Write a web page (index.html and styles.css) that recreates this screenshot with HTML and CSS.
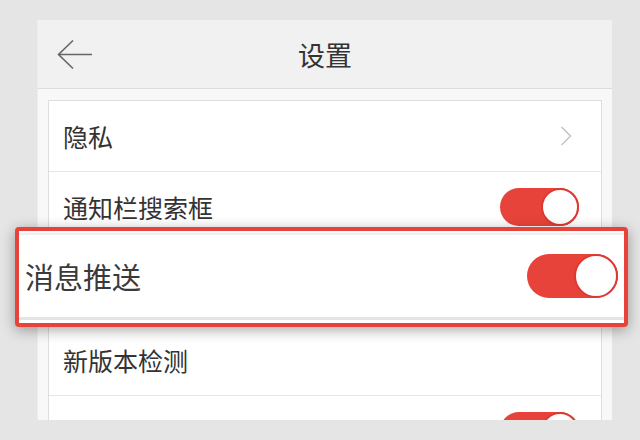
FILE: index.html
```html
<!DOCTYPE html>
<html lang="zh-CN">
<head>
    <meta charset="UTF-8">
    <meta name="viewport" content="width=device-width, initial-scale=1.0">
    <title>设置</title>
    <link rel="stylesheet" href="styles.css">
</head>
<body>

<div class="screen">
    <div class="topbar">
        <svg class="back" width="38" height="32" viewBox="0 0 38 32">
            <path d="M36 15.5 H2.5 M17 1.5 L2.5 15.5 L17 29.5" fill="none" stroke="#666" stroke-width="1.6"/>
        </svg>
        <h1 class="title">设置</h1>
        <span></span>
    </div>

    <div class="list">
        <div class="row">
            <span class="label">隐私</span>
            <svg class="chevron" width="12" height="20" viewBox="0 0 12 20">
                <path d="M1.5 1 L10.5 10 L1.5 19" fill="none" stroke="#c4c4c4" stroke-width="1.5"/>
            </svg>
        </div>
        <div class="row">
            <span class="label">通知栏搜索框</span>
            <span class="switch"></span>
        </div>
        <!-- covered by the callout below -->
        <div class="row row-tall">
            <span class="label">消息推送</span>
            <span class="switch"></span>
        </div>
        <div class="row">
            <span class="label">新版本检测</span>
        </div>
        <div class="row">
            <span class="label"></span>
            <span class="switch"></span>
        </div>
    </div>
</div>

<!-- enlarged copy of the push row, laid over the list -->
<div class="callout">
    <div class="callout-row">
        <span class="callout-label">消息推送</span>
        <span class="switch switch-lg"></span>
    </div>
</div>

</body>
</html>
```

FILE: styles.css
```css
body {
    margin: 0;
    background-color: #e5e5e5;
    font-family: "Noto Sans CJK SC", "Noto Sans", sans-serif;
    color: #333;
    height: 440px;
    overflow: hidden;
}

.screen {
    margin: 20px 0 0 38px;
    width: 574px;
    height: 400px;
    overflow: hidden;
    background-color: #f8f8f8;
    box-shadow: -1px 0 0 #ececec;
}

.topbar {
    height: 68px;
    background-color: #f1f1f1;
    border-bottom: 1px solid #dcdcdc;
    display: grid;
    grid-template-columns: 1fr auto 1fr;
    align-items: center;
}

.back {
    margin-left: 18px;
    margin-top: 2px;
}

.title {
    margin: 0;
    font-size: 27px;
    font-weight: 400;
    color: #333;
}

.list {
    margin: 11px 10px 0;
    background-color: #fff;
    border: 1px solid #dedede;
}

.row {
    height: 70px;
    border-bottom: 1px solid #e6e6e6;
    display: flex;
    align-items: center;
    justify-content: space-between;
    padding: 0 22px 0 14px;
}

.row-tall {
    height: 81px;
}

.row-tall > * {
    visibility: hidden;
}

.label {
    font-size: 25px;
    line-height: 1;
}

.chevron {
    margin-right: 7px;
}

.switch {
    position: relative;
    width: 79px;
    height: 38px;
    border-radius: 19px;
    background-color: #e8433a;
    box-sizing: border-box;
}

.switch::after {
    content: "";
    position: absolute;
    right: 0;
    top: 0;
    width: 38px;
    height: 38px;
    border-radius: 50%;
    background-color: #fff;
    border: 2px solid #dc3a31;
    box-sizing: border-box;
}

.switch-lg {
    width: 91px;
    height: 44px;
    border-radius: 22px;
}

.switch-lg::after {
    width: 44px;
    height: 44px;
}

.callout {
    position: absolute;
    left: 15px;
    top: 227px;
    width: 613px;
    height: 100px;
    box-sizing: border-box;
    border: 4px solid #e8433a;
    border-radius: 4px;
    background-color: #fff;
    box-shadow: 0 3px 14px rgba(0, 0, 0, 0.35);
    padding-top: 2px;
}

.callout-row {
    height: 82px;
    border-top: 2px solid #eef0f2;
    border-bottom: 3px solid #e4e4e4;
    display: flex;
    align-items: center;
    justify-content: space-between;
    padding: 0 6px;
}

.callout-label {
    font-size: 29px;
    line-height: 1;
    color: #3a3a3a;
}
```
